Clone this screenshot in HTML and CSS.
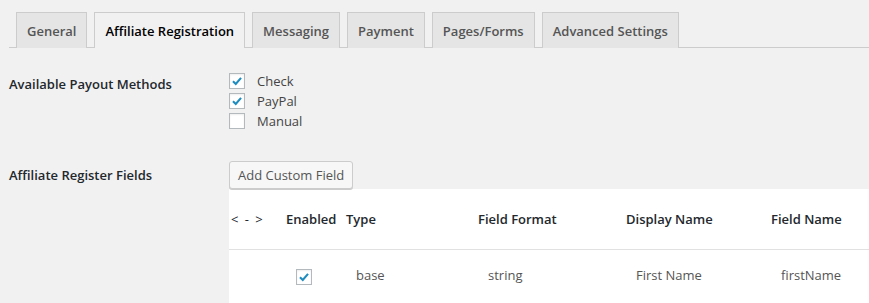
FILE: index.html
```html
<!DOCTYPE html>
<html lang="en">
<head>
  <meta charset="UTF-8" />
  <title>Affiliate Settings</title>
  <link rel="stylesheet" href="styles.css">
</head>
<body>
  <nav class="tabs">
    <a class="tab">General</a>
    <a class="tab active">Affiliate Registration</a>
    <a class="tab">Messaging</a>
    <a class="tab">Payment</a>
    <a class="tab">Pages/Forms</a>
    <a class="tab">Advanced Settings</a>
  </nav>

  <div class="form-row payout">
    <div class="label">Available Payout Methods</div>
    <div class="field">
      <label class="check-line"><span class="box checked"><svg viewBox="0 0 16 16"><path d="M3.4 8.2 L6.6 11.3 L12.6 4.4" /></svg></span>Check</label>
      <label class="check-line"><span class="box checked"><svg viewBox="0 0 16 16"><path d="M3.4 8.2 L6.6 11.3 L12.6 4.4" /></svg></span>PayPal</label>
      <label class="check-line"><span class="box"></span>Manual</label>
    </div>
  </div>

  <div class="form-row fields">
    <div class="label">Affiliate Register Fields</div>
    <div class="field">
      <button class="btn">Add Custom Field</button>
    </div>
  </div>

  <div class="table">
    <div class="thead">
      <div class="cell arrows">&lt; - &gt;</div>
      <div class="cell">Enabled</div>
      <div class="cell">Type</div>
      <div class="cell">Field Format</div>
      <div class="cell">Display Name</div>
      <div class="cell">Field Name</div>
    </div>
    <div class="trow">
      <div class="cell"></div>
      <div class="cell"><span class="box checked"><svg viewBox="0 0 16 16"><path d="M3.4 8.2 L6.6 11.3 L12.6 4.4" /></svg></span></div>
      <div class="cell">base</div>
      <div class="cell">string</div>
      <div class="cell">First Name</div>
      <div class="cell">firstName</div>
    </div>
  </div>
</body>
</html>
```

FILE: styles.css
```css
body {
  margin: 0;
  background: #f1f1f1;
  color: #23282d;
  font-family: 'Open Sans', 'Noto Sans', sans-serif;
  font-size: 13px;
  overflow: hidden;
}

.tabs {
  display: flex;
  margin: 12px 0 0 9px;
  border-bottom: 1px solid #ccc;
  height: 35px;
}

.tab {
  box-sizing: border-box;
  height: 36px;
  margin-left: 7px;
  padding: 6px 10px 4px;
  font-size: 13px;
  font-weight: 600;
  line-height: 24px;
  color: #555;
  background: #e5e5e5;
  border: 1px solid #ccc;
  border-bottom: none;
}

.tab.active {
  color: #000;
  background: #f1f1f1;
}

.form-row {
  display: grid;
  grid-template-columns: 220px 1fr;
  padding-left: 9px;
}

.label {
  font-size: 13px;
  font-weight: 600;
  line-height: 20px;
  color: #23282d;
}

.payout {
  margin-top: 23px;
}

.payout .label {
  padding-top: 3px;
}

.check-line {
  display: flex;
  align-items: center;
  height: 20px;
  font-size: 13px;
  color: #444;
}

.box {
  box-sizing: border-box;
  display: inline-block;
  width: 16px;
  height: 16px;
  margin-right: 12px;
  background: #fff;
  border: 1px solid #b4b9be;
  box-shadow: inset 0 1px 2px rgba(0, 0, 0, 0.07);
}

.box svg {
  display: block;
  width: 14px;
  height: 14px;
}

.box path {
  fill: none;
  stroke: #1e8cbe;
  stroke-width: 2.4;
}

.fields {
  margin-top: 30px;
}

.fields .label {
  padding-top: 4px;
}

.btn {
  height: 28px;
  padding: 0 8px;
  font-family: inherit;
  font-size: 13px;
  color: #555;
  background: #f7f7f7;
  border: 1px solid #ccc;
  border-radius: 3px;
  box-shadow: 0 1px 0 #ccc;
}

.table {
  margin-left: 229px;
  background: #fff;
  height: 120px;
}

.thead, .trow {
  display: grid;
  grid-template-columns: 55px 60px 132px 148px 145px 1fr;
  align-items: center;
}

.thead {
  height: 60px;
  border-bottom: 1px solid #e1e1e1;
  font-size: 13px;
  font-weight: 600;
}

.thead .cell {
  padding-left: 2px;
}

.thead .arrows {
  font-weight: 400;
  letter-spacing: 1.5px;
}

.trow {
  height: 50px;
  font-size: 13px;
  color: #555;
}

.trow .cell {
  padding-left: 12px;
}

.trow .box {
  display: block;
  margin: 3px 0 0;
}
```
